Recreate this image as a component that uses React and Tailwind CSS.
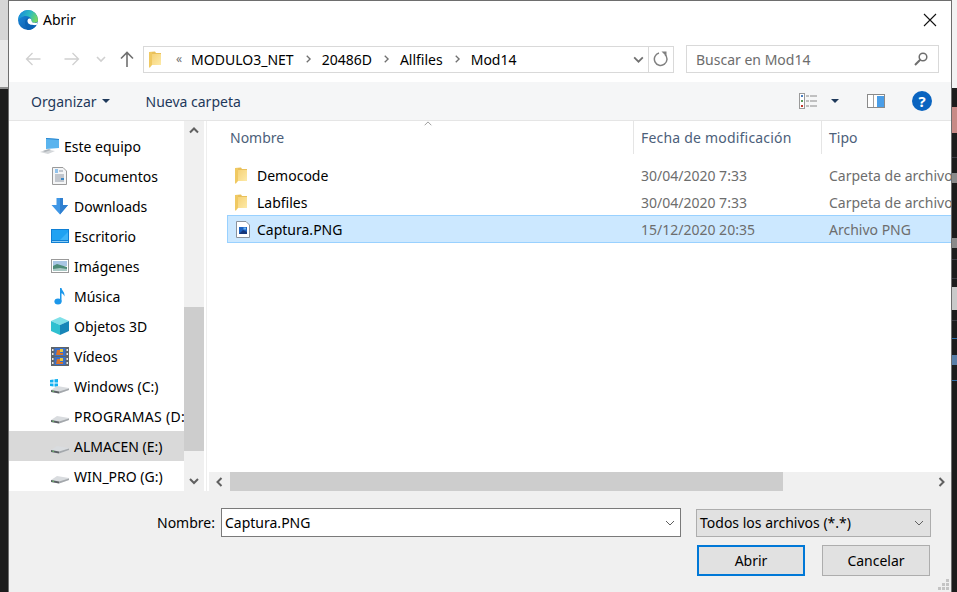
const font = { fontFamily: '"Noto Sans", "Open Sans", sans-serif' };

const FolderIcon = ({ className = "w-[12px] h-[17px]" }) => (
  <svg viewBox="0 0 12 17" className={className}>
    <defs>
      <linearGradient id="folderBody" x1="0" y1="0" x2="1" y2="1">
        <stop offset="0" stopColor="#f6d277" />
        <stop offset="1" stopColor="#fdeaa8" />
      </linearGradient>
    </defs>
    <path d="M0 1 L6 0.5 L7 2 L12 2 L12 14 L0 14 Z" fill="#e9c05a" />
    <path d="M3 3 L12 3 L12 14 L3 14 Z" fill="url(#folderBody)" />
    <path d="M0 1 L3 1 L3 14 L1 16.5 L0 16.5 Z" fill="#f0c962" />
  </svg>
);

const EdgeLogo = () => (
  <svg viewBox="0 0 20 20" className="w-[20px] h-[20px]">
    <defs>
      <linearGradient id="edgeTop" x1="0" y1="0.3" x2="1" y2="0.6">
        <stop offset="0" stopColor="#1687dc" />
        <stop offset="0.55" stopColor="#2cbcc0" />
        <stop offset="1" stopColor="#78d95c" />
      </linearGradient>
      <linearGradient id="edgeLow" x1="0" y1="0" x2="1" y2="1">
        <stop offset="0" stopColor="#1a8ee0" />
        <stop offset="1" stopColor="#0a4f9e" />
      </linearGradient>
    </defs>
    <circle cx="10" cy="10" r="10" fill="url(#edgeLow)" />
    <path d="M0 10 A10 10 0 0 1 20 10 C20 12.5 17.5 13 15 12.5 C13.5 12 13.5 10 13 8.5 C11.5 5.5 6 5 3 7.5 C1.5 8.5 0.5 9.5 0 10 Z" fill="url(#edgeTop)" />
    <path d="M8 11 C8.5 8.5 12.5 7.5 13.2 9.5 C13.6 11.5 14 12.6 15.5 12.8 C17 13 18.5 13 19.7 12.5 C19.4 13.5 19 14.2 18.6 15 C16 15.5 9.5 15 8 11 Z" fill="#ffffff" />
    <path d="M7 12 C7 9.5 9 8 11 8.2 C9.5 9 9 11 10 13 C11.5 15.5 15 16.5 18.6 15 C16.8 18 13.5 20 10 20 C8 19 7 15 7 12 Z" fill="#0a62b4" />
  </svg>
);

const Chevron = ({ dir = "down", className = "", color = "#606060", width = 1.6 }) => {
  const paths = {
    up: "M2 7.5 L6 3.5 L10 7.5",
    down: "M2 4 L6 8 L10 4",
    left: "M7.5 2 L3.5 6 L7.5 10",
    right: "M4.5 2 L8.5 6 L4.5 10",
  };
  return (
    <svg viewBox="0 0 12 12" className={className}>
      <path d={paths[dir]} fill="none" stroke={color} strokeWidth={width} />
    </svg>
  );
};

const NavArrow = ({ flip, color }) => (
  <svg viewBox="0 0 16 14" className={`w-[16px] h-[14px] ${flip ? "rotate-180" : ""}`}>
    <path d="M1.5 7 H15.5 M7.5 1 L1.5 7 L7.5 13" fill="none" stroke={color} strokeWidth="1.3" />
  </svg>
);

const PcIcon = () => (
  <svg viewBox="0 0 20 18" className="w-[20px] h-[18px]">
    <path d="M6 1 L19 2 V11 L6 12 Z" fill="#5ab4ee" />
    <path d="M6 1 L19 2 V3 L6 2 Z" fill="#2a86cf" />
    <path d="M0 15 L7 12.5 L15 14 L8 17 Z" fill="#d4d7da" />
    <path d="M3 14 L9 12 L11 13 L5 15 Z" fill="#aeb3b8" />
  </svg>
);

const DocIcon = () => (
  <svg viewBox="0 0 15 18" className="w-[15px] h-[18px]">
    <path d="M0.5 0.5 H11 L14.5 4 V17.5 H0.5 Z" fill="#f4f5f6" stroke="#9a9a9a" />
    <path d="M3 3 H6 M3 5 H6" stroke="#2f8fe0" strokeWidth="1" />
    <path d="M7 4 H11 M3 8 H12 M3 10 H12 M3 12 H9 M3 14 H12" stroke="#8f97a3" strokeWidth="1" />
    <path d="M9 11 H12 V13 H9 Z" fill="#3b87c4" />
  </svg>
);

const DownloadIcon = () => (
  <svg viewBox="0 0 18 17" className="w-[18px] h-[17px]">
    <path d="M5.5 0 H12 V7 H17 L9 16.5 L0.5 7 H5.5 Z" fill="#3f97e6" />
    <path d="M9 0 H12 V7 H17 L9 16.5 Z" fill="#2f7fd0" />
  </svg>
);

const DesktopIcon = () => (
  <svg viewBox="0 0 18 14" className="w-[18px] h-[14px]">
    <rect width="18" height="14" fill="#0f7fd4" />
    <rect x="1" y="1" width="16" height="10" fill="#1fa2f2" />
    <path d="M9 11 L17 3 V11 Z" fill="#3eb4f8" />
    <rect x="1" y="12" width="16" height="1" fill="#8ccdf5" />
  </svg>
);

const PictureIcon = () => (
  <svg viewBox="0 0 18 14" className="w-[18px] h-[14px]">
    <rect x="0.5" y="0.5" width="17" height="13" fill="#fff" stroke="#9a9a9a" />
    <rect x="2" y="2" width="14" height="5" fill="#a9c6e4" />
    <path d="M2 7 L6 5 L11 6.5 L16 8 V12 H2 Z" fill="#4d8b78" />
    <path d="M2 10 L9 9 L16 10 V12 H2 Z" fill="#a9c8c4" />
  </svg>
);

const MusicIcon = () => (
  <svg viewBox="0 0 11 17" className="w-[11px] h-[17px]">
    <ellipse cx="4" cy="13.5" rx="3.6" ry="3" fill="#1c97ea" />
    <path d="M6 0 H7.5 C8 3 11 4 10.5 8.5 C9.8 6.5 8.5 5.5 7.5 5.2 V13.5 H6 Z" fill="#1c97ea" />
  </svg>
);

const CubeIcon = () => (
  <svg viewBox="0 0 18 18" className="w-[18px] h-[18px]">
    <path d="M9 0 L18 4 L9 8 L0 4 Z" fill="#7fe0e8" />
    <path d="M0 4 L9 8 V18 L0 14 Z" fill="#2fc0d0" />
    <path d="M18 4 L9 8 V18 L18 14 Z" fill="#1786b8" />
  </svg>
);

const VideoIcon = () => (
  <svg viewBox="0 0 18 19" className="w-[18px] h-[19px]">
    <rect width="18" height="19" fill="#5f6468" />
    <rect x="3.5" y="1" width="11" height="8" fill="#3a70c8" />
    <rect x="3.5" y="10" width="11" height="8" fill="#3a70c8" />
    <path d="M6 3 H9 V6 H12 V8 H5 Z M6 12 H9 V15 H12 V17 H5 Z" fill="#d8732c" />
    <path d="M9 2 H12 V5 H9 Z M9 11 H12 V14 H9 Z" fill="#e6c63c" />
    <path d="M1 2 H2.5 V4 H1 Z M1 6 H2.5 V8 H1 Z M1 11 H2.5 V13 H1 Z M1 15 H2.5 V17 H1 Z M15.5 2 H17 V4 H15.5 Z M15.5 6 H17 V8 H15.5 Z M15.5 11 H17 V13 H15.5 Z M15.5 15 H17 V17 H15.5 Z" fill="#e8e8e8" />
  </svg>
);

const DriveIcon = ({ windows }) => (
  <svg viewBox="0 0 19 15" className="w-[19px] h-[15px]">
    {windows && (
      <path d="M0 1 L3.5 0.5 V3.5 H0 Z M4.5 0.3 L8 0 V3.5 H4.5 Z M0 4.5 H3.5 V7.5 L0 7 Z M4.5 4.5 H8 V8 L4.5 7.6 Z" fill="#12b0f0" />
    )}
    <path d="M1 11 L7 7 L19 9 V11 L9 14.5 L1 13 Z" fill="#d9dcdf" />
    <path d="M1 11 L9 12.5 V14.5 L1 13 Z" fill="#5c6065" />
    <path d="M9 12.5 L19 9.5 V11 L9 14.5 Z" fill="#a4a8ac" />
    <rect x="2.5" y="11.7" width="1.5" height="1" fill="#6fd06a" />
  </svg>
);

const ImageFileIcon = () => (
  <svg viewBox="0 0 14 17" className="w-[14px] h-[17px]">
    <path d="M0.5 0.5 H10 L13.5 4 V16.5 H0.5 Z" fill="#fff" stroke="#8a929c" />
    <rect x="3" y="6" width="8" height="7" fill="#1d62c0" />
    <path d="M3 13 L7 9 L11 11 V13 Z" fill="#17377a" />
    <rect x="7.5" y="6.5" width="2.5" height="2" fill="#6fb6f0" />
  </svg>
);

const ViewIcon = () => (
  <svg viewBox="0 0 18 16" className="w-[18px] h-[16px]">
    <rect x="0.5" y="0.5" width="5" height="15" fill="#fff" stroke="#9a9a9a" />
    <rect x="2" y="2" width="2" height="2" fill="#4a7fc0" />
    <rect x="2" y="7" width="2" height="2" fill="#5a9a5a" />
    <rect x="2" y="12" width="2" height="2" fill="#c0392b" />
    <path d="M7 3 H10 M11 3 H18 M7 8 H10 M11 8 H18 M7 13 H10 M11 13 H18" stroke="#8a8a8a" strokeWidth="1" />
  </svg>
);

const PaneIcon = () => (
  <svg viewBox="0 0 18 14" className="w-[18px] h-[14px]">
    <rect x="0.5" y="0.5" width="17" height="13" fill="#fff" stroke="#8a8a8a" />
    <rect x="6" y="1" width="1" height="12" fill="#a0a0a0" />
    <rect x="10" y="2" width="7" height="11" fill="#4a9ee8" />
  </svg>
);

const sidebarItems = [
  { label: "Documentos", icon: <DocIcon /> },
  { label: "Downloads", icon: <DownloadIcon /> },
  { label: "Escritorio", icon: <DesktopIcon /> },
  { label: "Imágenes", icon: <PictureIcon /> },
  { label: "Música", icon: <MusicIcon /> },
  { label: "Objetos 3D", icon: <CubeIcon /> },
  { label: "Vídeos", icon: <VideoIcon /> },
  { label: "Windows (C:)", icon: <DriveIcon windows /> },
  { label: "PROGRAMAS (D:)", icon: <DriveIcon />, labelClass: "tracking-[0.3px]" },
  { label: "ALMACEN (E:)", icon: <DriveIcon />, selected: true },
  { label: "WIN_PRO (G:)", icon: <DriveIcon /> },
];

const files = [
  { name: "Democode", date: "30/04/2020 7:33", type: "Carpeta de archivos", rowClass: "h-[27px]", iconCol: "w-[30px] pr-[2px]" },
  { name: "Labfiles", date: "30/04/2020 7:33", type: "Carpeta de archivos", rowClass: "h-[26px]", iconCol: "w-[30px] pr-[2px]" },
  { name: "Captura.PNG", date: "15/12/2020 20:35", type: "Archivo PNG", selected: true, rowClass: "h-[28px] bg-[#cce8ff] border-y border-l border-[#99d1ff]", iconCol: "w-[29px]" },
];

const crumbs = ["MODULO3_NET", "20486D", "Allfiles", "Mod14"];

// slices of the window behind the dialog, top to bottom
const behindRight = [
  { h: "h-[88px]", bg: "bg-[#f3f3f3]" },
  { h: "h-[19px]", bg: "" },
  { h: "h-[26px]", bg: "bg-[#c88a86]" },
  { h: "h-[24px]", bg: "" },
  { h: "h-[1px]", bg: "bg-[#3c3c44]" },
  { h: "h-[15px]", bg: "" },
  { h: "h-[10px]", bg: "bg-[#8a8a8a]" },
  { h: "h-[55px]", bg: "" },
  { h: "h-[10px]", bg: "bg-[#8a8a8a]" },
  { h: "h-[11px]", bg: "" },
  { h: "h-[1px]", bg: "bg-[#3c3c44]" },
  { h: "h-[18px]", bg: "" },
  { h: "h-[1px]", bg: "bg-[#3c3c44]" },
  { h: "h-[8px]", bg: "" },
  { h: "h-[23px]", bg: "bg-[#c9c9c9]" },
  { h: "h-[10px]", bg: "" },
  { h: "h-[1px]", bg: "bg-[#3c3c44]" },
  { h: "h-[17px]", bg: "" },
  { h: "h-[1px]", bg: "bg-[#2f6ea8]" },
  { h: "h-[16px]", bg: "" },
  { h: "h-[10px]", bg: "bg-[#5a7fa8]" },
  { h: "h-[15px]", bg: "" },
  { h: "h-[1px]", bg: "bg-[#2f6ea8]" },
];

export default function App() {
  return (
    <div className="flex w-[957px] h-[592px] overflow-hidden bg-[#1c1c1c] text-[14px] text-black" style={font}>
      {/* what is behind the dialog */}
      <div className="w-[8px] shrink-0 flex flex-col">
        <div className="h-[40px] bg-[#d6d6d6]" />
        <div className="h-[47px] bg-[#e9e9e9]" />
        <div className="h-[2px] bg-[#8c8c8c]" />
      </div>

      <div className="w-[944px] shrink-0 flex flex-col bg-white border-x border-t border-[#6e6e6e]">
        {/* title bar */}
        <div className="h-[37px] shrink-0 flex items-center pl-[9px] pr-[14px]">
          <EdgeLogo />
          <span className="ml-[5px] text-[14px]">Abrir</span>
          <svg viewBox="0 0 14 14" className="ml-auto w-[14px] h-[14px]">
            <path d="M1 1 L13 13 M13 1 L1 13" stroke="#111" strokeWidth="1.1" />
          </svg>
        </div>

        {/* navigation row */}
        <div className="h-[44px] shrink-0 flex items-center pb-[2px]">
          <div className="ml-[16px]"><NavArrow color="#d0d0d0" /></div>
          <div className="ml-[23px]"><NavArrow flip color="#d0d0d0" /></div>
          <Chevron dir="down" className="ml-[15px] w-[12px] h-[12px]" color="#d0d0d0" />
          <svg viewBox="0 0 14 16" className="ml-[13px] w-[14px] h-[16px]">
            <path d="M7 16 V1.5 M1 7.5 L7 1.5 L13 7.5" fill="none" stroke="#707070" strokeWidth="1.6" />
          </svg>
          <div className="ml-[9px] w-[531px] h-[27px] flex items-center border border-[#d9d9d9]">
            <FolderIcon className="ml-[5px] w-[12px] h-[17px]" />
            <span className="ml-[15px] text-[12px] leading-none text-[#707070]">«</span>
            <span className="ml-[9px] flex items-center">
              {crumbs.map((c, i) => (
                <span key={c} className="flex items-center">
                  {i > 0 && <Chevron dir="right" className="mx-[9px] w-[10px] h-[10px]" color="#707070" />}
                  <span className="text-[14px]">{c}</span>
                </span>
              ))}
            </span>
            <Chevron dir="down" className="ml-auto mr-[3px] w-[13px] h-[13px]" color="#707070" />
            <div className="h-full w-[25px] shrink-0 flex items-center justify-center border-l border-[#d9d9d9]">
              <svg viewBox="0 0 16 16" className="w-[16px] h-[16px]">
                <path d="M12 3.5 A6.3 6.3 0 1 1 6 2" fill="none" stroke="#808080" strokeWidth="1.5" />
                <path d="M8.5 0.5 L13.5 0.5 L13.5 5.5 Z" fill="#808080" />
              </svg>
            </div>
          </div>
          <div className="ml-[12px] w-[253px] h-[28px] flex items-center border border-[#d9d9d9] pl-[9px] pr-[10px]">
            <span className="text-[14px] text-[#6d6d6d]">Buscar en Mod14</span>
            <svg viewBox="0 0 14 14" className="ml-auto w-[14px] h-[14px]">
              <circle cx="9" cy="5" r="3.8" fill="none" stroke="#6e6e6e" strokeWidth="1.5" />
              <path d="M6.2 7.8 L1 13" stroke="#6e6e6e" strokeWidth="2" />
            </svg>
          </div>
        </div>

        {/* command bar */}
        <div className="h-[39px] shrink-0 flex items-center bg-[#f5f6f7] border-b border-[#e5e5e5] text-[14px] text-[#1e395b]">
          <span className="ml-[22px]">Organizar</span>
          <span className="ml-[5px] w-0 h-0 border-x-[4px] border-x-transparent border-t-[4px] border-t-[#1e395b]" />
          <span className="ml-[36px]">Nueva carpeta</span>
          <div className="ml-auto flex items-center pr-[19px]">
            <ViewIcon />
            <span className="ml-[14px] w-0 h-0 border-x-[4px] border-x-transparent border-t-[4px] border-t-[#1e395b]" />
            <span className="ml-[28px]"><PaneIcon /></span>
            <span className="ml-[27px] w-[20px] h-[20px] rounded-full bg-[#0a64c0] text-white font-bold text-[15px] leading-none flex items-center justify-center">?</span>
          </div>
        </div>

        {/* main area */}
        <div className="h-[370px] shrink-0 flex">
          {/* sidebar */}
          <div className="w-[175px] shrink-0 overflow-hidden pt-[10px]">
            <div className="h-[30px] flex items-center pl-[31px]">
              <PcIcon />
              <span className="ml-[4px] whitespace-nowrap">Este equipo</span>
            </div>
            {sidebarItems.map((item) => (
              <div
                key={item.label}
                className={`h-[30px] flex items-center pl-[41px] whitespace-nowrap ${item.selected ? "bg-[#d9d9d9]" : ""}`}
              >
                <span className="w-[19px] shrink-0 flex justify-center">{item.icon}</span>
                <span className={`ml-[5px] ${item.labelClass || ""}`}>{item.label}</span>
              </div>
            ))}
          </div>

          {/* sidebar scrollbar */}
          <div className="w-[20px] shrink-0 flex flex-col bg-[#f0f0f0]">
            <div className="h-[20px] flex items-center justify-center">
              <Chevron dir="up" className="w-[12px] h-[12px]" color="#606060" width={2} />
            </div>
            <div className="h-[166px]" />
            <div className="h-[144px] bg-[#cdcdcd]" />
            <div className="flex-1" />
            <div className="h-[20px] flex items-center justify-center">
              <Chevron dir="down" className="w-[12px] h-[12px]" color="#606060" width={2} />
            </div>
          </div>

          <div className="w-[3px] shrink-0 border-r border-[#eeeeee]" />

          {/* file list */}
          <div className="flex-1 min-w-0 flex flex-col">
            <div className="flex-1 min-h-0 overflow-hidden">
              <div className="relative h-[33px] flex text-[#4c607a]">
                <Chevron dir="up" className="absolute left-[215px] -top-[2px] w-[12px] h-[10px]" color="#8a8a8a" width={1} />
                <div className="w-[427px] shrink-0 pl-[23px] pt-[6px] border-r border-[#e5e5e5]">Nombre</div>
                <div className="w-[188px] shrink-0 pl-[7px] pt-[6px] border-r border-[#e5e5e5] tracking-[0.2px]">Fecha de modificación</div>
                <div className="pl-[7px] pt-[6px]">Tipo</div>
              </div>
              <div className="mt-[8px] ml-[20px]">
                {files.map((f) => (
                  <div key={f.name} className={`flex items-center whitespace-nowrap ${f.rowClass}`}>
                    <span className={`${f.iconCol} shrink-0 flex justify-center`}>
                      {f.selected ? <ImageFileIcon /> : <FolderIcon />}
                    </span>
                    <span className="w-[384px] shrink-0">{f.name}</span>
                    <span className="w-[188px] shrink-0 text-[#6d6d6d]">{f.date}</span>
                    <span className="text-[#6d6d6d]">{f.type}</span>
                  </div>
                ))}
              </div>
            </div>

            {/* horizontal scrollbar */}
            <div className="h-[19px] shrink-0 ml-[2px] flex bg-[#f0f0f0]">
              <div className="w-[21px] flex items-center justify-center">
                <Chevron dir="left" className="w-[12px] h-[12px]" color="#606060" width={2} />
              </div>
              <div className="w-[553px] bg-[#cdcdcd]" />
              <div className="ml-auto w-[20px] flex items-center justify-center">
                <Chevron dir="right" className="w-[12px] h-[12px]" color="#606060" width={2} />
              </div>
            </div>
          </div>
        </div>

        {/* bottom bar */}
        <div className="relative flex-1 bg-[#f0f0f0]">
          <div className="flex items-center pt-[17px]">
            <span className="ml-[148px] w-[64px]">Nombre:</span>
            <div className="w-[460px] h-[29px] flex items-center bg-white border border-[#7a7a7a] pl-[3px] pr-[4px]">
              <span>Captura.PNG</span>
              <Chevron dir="down" className="ml-auto w-[12px] h-[12px]" color="#606060" width={1} />
            </div>
            <div className="ml-[15px] w-[235px] h-[28px] flex items-center bg-[#e1e1e1] border border-[#adadad] pl-[3px] pr-[5px]">
              <span>Todos los archivos (*.*)</span>
              <Chevron dir="down" className="ml-auto w-[12px] h-[12px]" color="#606060" width={1} />
            </div>
          </div>
          <div className="flex justify-end mt-[8px] pr-[21px]">
            <button className="w-[108px] h-[31px] bg-[#e1e1e1] border-2 border-[#0078d7]">Abrir</button>
            <button className="ml-[17px] w-[108px] h-[31px] bg-[#e1e1e1] border border-[#adadad]">Cancelar</button>
          </div>
          <svg viewBox="0 0 12 12" className="absolute right-[1px] bottom-[1px] w-[12px] h-[12px]">
            <path d="M8 0 H11 V3 H8 Z M4 4 H7 V7 H4 Z M8 4 H11 V7 H8 Z M0 8 H3 V11 H0 Z M4 8 H7 V11 H4 Z M8 8 H11 V11 H8 Z" fill="#c4c4c4" />
          </svg>
        </div>
      </div>

      {/* right side of the window behind */}
      <div className="w-[5px] shrink-0 flex flex-col">
        {behindRight.map((s, i) => (
          <div key={i} className={`${s.h} ${s.bg}`} />
        ))}
      </div>
    </div>
  );
}
